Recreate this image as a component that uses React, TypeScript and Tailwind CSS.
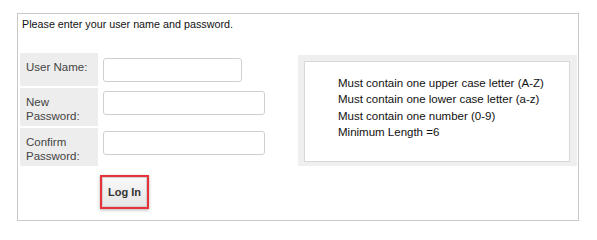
import React from 'react';

const font = { fontFamily: '"Liberation Sans", Arial, sans-serif' };

function FieldRow({
  label,
  rowH,
  inputW,
  inputTop,
}: {
  label: React.ReactNode;
  rowH: string;
  inputW: string;
  inputTop: string;
}) {
  return (
    <div className={`flex ${rowH}`}>
      <div className="w-[78px] bg-[#ededed] pl-[6px] pt-[7px] text-[11.5px] leading-[14px] text-[#444]">
        {label}
      </div>
      <input
        type="text"
        className={`ml-[5px] ${inputTop} ${inputW} h-[24px] rounded-[3px] border border-[#cfcfcf] bg-white outline-none`}
      />
    </div>
  );
}

export default function App() {
  return (
    <div className="w-[597px] h-[238px] bg-white pt-[13px] pl-[17px]" style={font}>
      <div className="w-[562px] h-[208px] border border-[#c9c9c9] pl-[2px] pt-[4px]">
        <p className="ml-[2px] text-[10.75px] leading-[13px] text-[#111]">
          Please enter your user name and password.
        </p>

        <div className="flex mt-[22px]">
          <div className="flex flex-col gap-[2px]">
            <FieldRow label="User Name:" rowH="h-[33px]" inputW="w-[139px]" inputTop="mt-[5px]" />
            <FieldRow
              label={
                <>
                  New
                  <br />
                  Password:
                </>
              }
              rowH="h-[38px]"
              inputW="w-[162px]"
              inputTop="mt-[3px]"
            />
            <FieldRow
              label={
                <>
                  Confirm
                  <br />
                  Password:
                </>
              }
              rowH="h-[38px]"
              inputW="w-[162px]"
              inputTop="mt-[3px]"
            />
            <div className="pl-[80px] pt-[7px]">
              <div className="inline-block border-2 border-[#e8323a] shadow-[0_1px_3px_rgba(0,0,0,0.3)]">
                <button className="block w-[45px] h-[30px] bg-gradient-to-b from-[#f8f8f8] to-[#e6e6e6] text-[11px] font-bold text-[#333] border border-[#d0d0d0]">
                  Log In
                </button>
              </div>
            </div>
          </div>

          <div className="ml-[33px] mt-[2px] w-[279px] h-[111px] bg-[#efefef] pt-[6px] pl-[6px]">
            <div className="w-[266px] h-[101px] bg-white border border-[#d8d8d8] pl-[33px] pt-[13px] text-[11.5px] leading-[16.3px] text-[#111]">
              <p>Must contain one upper case letter (A-Z)</p>
              <p>Must contain one lower case letter (a-z)</p>
              <p>Must contain one number (0-9)</p>
              <p>Minimum Length =6</p>
            </div>
          </div>
        </div>
      </div>
    </div>
  );
}
